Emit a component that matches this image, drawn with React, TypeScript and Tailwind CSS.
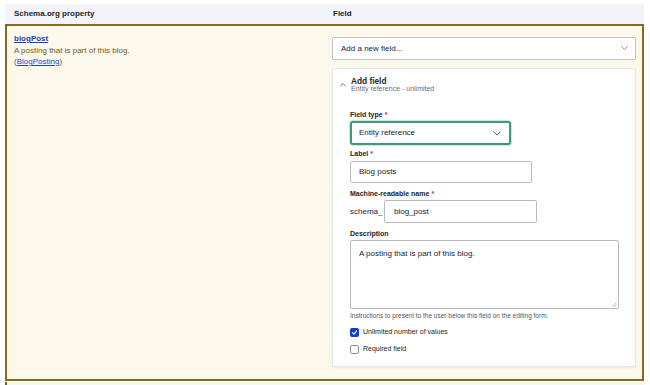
import React from "react";

const Chevron = ({ up = false, className = "", stroke = "#6b6d75", w = 7 }: { up?: boolean; className?: string; stroke?: string; w?: number }) => (
  <svg width={w} height={w * 0.6} viewBox="0 0 10 6" className={className} fill="none">
    <path d={up ? "M1 5 L5 1 L9 5" : "M1 1 L5 5 L9 1"} stroke={stroke} strokeWidth="1.2" strokeLinecap="round" strokeLinejoin="round" />
  </svg>
);

const Req = () => <span className="text-[#d42a2a] ml-[2px]">*</span>;

export default function App() {
  return (
    <div className="w-[650px] h-[385px] overflow-hidden bg-white pt-[4px] pl-[5px] pr-[6px] font-['Liberation_Sans',Arial,sans-serif] text-[#222330]">
      {/* header */}
      <div className="flex h-[20px] bg-[#f3f4f9] items-center text-[8px] font-bold text-[#232429]">
        <div className="w-[320px] pl-[9px]">Schema.org property</div>
        <div className="pl-[8px]">Field</div>
      </div>

      {/* row */}
      <div className="flex h-[357px] border-2 border-[#876a1e] bg-[#fdf8ec]">
        <div className="w-[318px] pl-[7px] pt-[6px] text-[8px]">
          <div className="leading-[13px] font-bold text-[#1d44c0] underline">blogPost</div>
          <div className="leading-[11px] text-[#6e5c1e]">A posting that is part of this blog.</div>
          <div className="leading-[11px] text-[#6e5c1e]">
            (<span className="text-[#1d44c0] underline">BlogPosting</span>)
          </div>
        </div>

        <div className="flex-1 pl-[7px] pr-[6px] pt-[11px]">
          <div className="h-[23px] flex items-center justify-between bg-white border border-[#c4c5ca] rounded-[2px] pl-[8px] pr-[7px] text-[8px]">
            <span>Add a new field...</span>
            <Chevron w={7} stroke="#7a7c84" />
          </div>

          <div className="mt-[8px] bg-white border border-[#e8e6e0] rounded-[2px] shadow-[0_1px_2px_rgba(0,0,0,0.06)]">
            <div className="flex pl-[7px] pt-[8px]">
              <div className="w-[11px] pt-[6px]">
                <Chevron up w={6} stroke="#33343a" />
              </div>
              <div>
                <div className="text-[8.3px] leading-[8px] font-bold text-[#232429]">Add field</div>
                <div className="text-[7px] leading-[7px] text-[#6b6d75]">Entity reference - unlimited</div>
              </div>
            </div>

            <div className="pl-[17px] pr-[16px] mt-[18px] pb-[12px]">
              <div className="text-[7px] leading-[10px] font-bold text-[#232429]">Field type<Req /></div>
              <div className="mt-[1px] w-[161px] h-[24px] flex items-center justify-between border-2 border-[#3f9b76] rounded-[3px] shadow-[0_0_0_1px_#cfe8dc] bg-white pl-[7px] pr-[8px] text-[8px]">
                <span>Entity reference</span>
                <Chevron w={8} stroke="#3b5bc4" />
              </div>

              <div className="mt-[4px] text-[7px] leading-[10px] font-bold text-[#232429]">Label<Req /></div>
              <div className="mt-[2px] w-[182px] h-[22px] flex items-center border border-[#b9bac0] rounded-[2px] bg-white pl-[8px] text-[8px]">Blog posts</div>

              <div className="mt-[6px] text-[7px] leading-[10px] font-bold text-[#232429]">Machine-readable name<Req /></div>
              <div className="mt-[1px] flex items-center h-[23px] text-[8px]">
                <span className="w-[34px]">schema_</span>
                <div className="w-[153px] h-[23px] flex items-center border border-[#b9bac0] rounded-[2px] bg-white pl-[9px]">blog_post</div>
              </div>

              <div className="mt-[6px] text-[7px] leading-[10px] font-bold text-[#232429]">Description</div>
              <div className="relative mt-[1px] w-[269px] h-[69px] border border-[#b9bac0] rounded-[2px] bg-white pl-[8px] pt-[8px] text-[8px] leading-[10px]">
                A posting that is part of this blog.
                <svg className="absolute right-[1px] bottom-[1px]" width="5" height="5" viewBox="0 0 5 5">
                  <path d="M4.5 0.5 L0.5 4.5 M4.5 2.5 L2.5 4.5" stroke="#9a9ba0" strokeWidth="0.7" />
                </svg>
              </div>

              <div className="mt-[3px] text-[6.5px] leading-[8px] text-[#55565c]">
                Instructions to present to the user below this field on the editing form.
              </div>

              <div className="mt-[7px] flex items-center h-[10px] gap-[4px]">
                <div className="w-[9px] h-[9px] rounded-[2px] bg-[#0f3fc4] flex items-center justify-center">
                  <svg width="7" height="7" viewBox="0 0 10 10" fill="none">
                    <path d="M2 5.2 L4.2 7.4 L8.2 2.6" stroke="white" strokeWidth="1.6" strokeLinecap="round" strokeLinejoin="round" />
                  </svg>
                </div>
                <span className="text-[7px] text-[#232429]">Unlimited number of values</span>
              </div>

              <div className="mt-[7px] flex items-center h-[10px] gap-[4px]">
                <div className="w-[9px] h-[9px] rounded-[2px] border border-[#8e9097] bg-white" />
                <span className="text-[7px] text-[#232429]">Required field</span>
              </div>
            </div>
          </div>
        </div>
      </div>

      {/* next row */}
      <div className="mt-[1px] h-[10px] border-l-2 border-[#3f7a3c] bg-[#f4f9ef]" />
    </div>
  );
}
